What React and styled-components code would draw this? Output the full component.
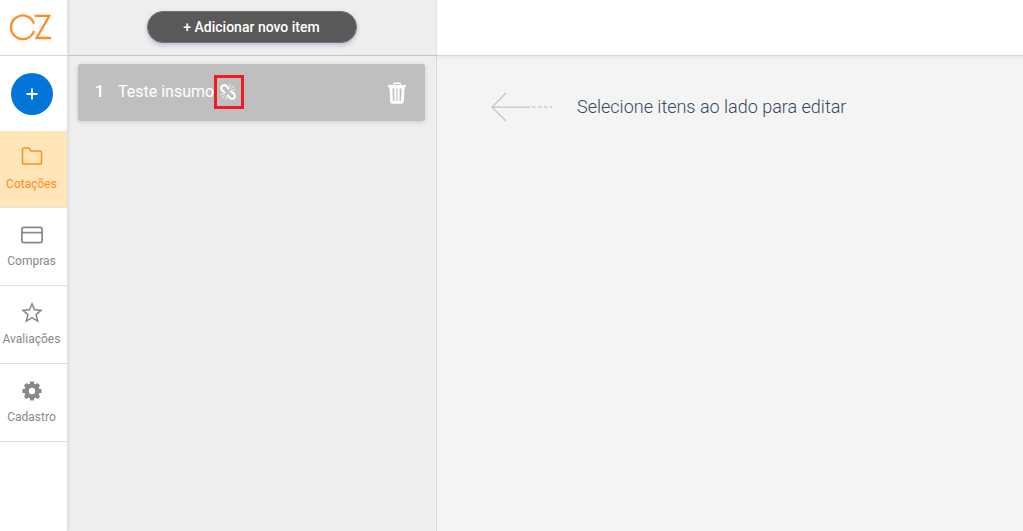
import React from "react";
import styled, { createGlobalStyle } from "styled-components";

const GlobalStyle = createGlobalStyle`
  * {
    box-sizing: border-box;
  }
  body {
    margin: 0;
    font-family: Roboto, "Liberation Sans", sans-serif;
    background: #f4f4f4;
  }
`;

const Page = styled.div`
  display: flex;
  min-height: 100vh;
`;

const Sidebar = styled.nav`
  display: flex;
  flex-direction: column;
  flex: 0 0 68px;
  background: #fff;
  border-right: 1px solid #dedede;
  box-shadow: 1px 0 3px rgba(0, 0, 0, 0.06);
  z-index: 2;
`;

const LogoLink = styled.a`
  display: flex;
  align-items: center;
  height: 56px;
  padding: 0 0 2px 10px;
  border-bottom: 1px solid #d8d8d8;
`;

const NewArea = styled.div`
  display: flex;
  align-items: center;
  justify-content: center;
  height: 75px;
  padding-right: 3px;
`;

const RoundButton = styled.button`
  display: flex;
  align-items: center;
  justify-content: center;
  width: 42px;
  height: 42px;
  padding: 0;
  border: none;
  border-radius: 50%;
  background: #0275d8;
  color: #fff;
  cursor: pointer;
`;

const NavItem = styled.a`
  display: flex;
  flex-direction: column;
  align-items: center;
  gap: 8px;
  height: ${(props) => (props.$active ? "77px" : "78px")};
  padding: 15px 4px 0 0;
  border-bottom: 1px solid #e2e2e2;
  background: ${(props) => (props.$active ? "#ffe5b8" : "#fff")};
  color: ${(props) => (props.$active ? "#ff8c1a" : "#888")};
  font-size: 12px;
  line-height: 16px;
  text-decoration: none;
`;

const ItemsPanel = styled.section`
  flex: 0 0 369px;
  background: #eee;
`;

const PanelHeader = styled.header`
  display: flex;
  align-items: center;
  justify-content: center;
  height: 56px;
  padding: 0 2px 1px 0;
  border-bottom: 1px solid #c3c3cf;
`;

const AddButton = styled.button`
  width: 210px;
  height: 32px;
  border: 1px solid #6b7488;
  border-radius: 16px;
  background: #595959;
  box-shadow: 0 2px 4px rgba(70, 70, 110, 0.3);
  color: #fff;
  font-family: inherit;
  font-size: 14px;
  font-weight: 500;
  cursor: pointer;
`;

const ItemList = styled.ul`
  min-height: calc(100vh - 56px);
  margin: 0;
  padding: 8px 11px 8px 10px;
  border-right: 1px solid #d9d9e0;
  list-style: none;
`;

const Item = styled.li`
  display: flex;
  align-items: center;
  height: 57px;
  padding: 0 19px 2px 17px;
  border-radius: 3px;
  background: #bfbfbf;
  box-shadow: 0 1px 5px rgba(0, 0, 0, 0.14);
  color: #fff;
  font-size: 16px;
  line-height: 20px;
`;

const ItemNumber = styled.span`
  width: 23px;
  font-weight: 500;
`;

const UnlinkedMark = styled.span`
  display: flex;
  align-items: center;
  justify-content: center;
  width: 30px;
  height: 34px;
  padding-right: 2px;
  border: 3px solid #ed1c24;
`;

const TrashButton = styled.button`
  display: flex;
  margin-left: auto;
  padding: 2px 0 0;
  border: none;
  background: transparent;
  color: #fff;
  cursor: pointer;
`;

const Content = styled.main`
  flex: 1;
  min-width: 0;
`;

const ContentHeader = styled.header`
  height: 56px;
  background: #fff;
  border-bottom: 1px solid #d8d8d8;
  box-shadow: 0 1px 4px rgba(0, 0, 0, 0.08);
`;

const EmptyState = styled.div`
  display: flex;
  align-items: center;
  gap: 24px;
  padding: 36px 24px 0 54px;
`;

const EmptyText = styled.p`
  margin: 0;
  color: #34495e;
  font-size: 18px;
  font-weight: 300;
  line-height: 24px;
`;

const Logo = () => (
  <svg width="44" height="30" viewBox="0 0 44 30" fill="none" stroke="#ff8c26" strokeWidth="2.3">
    <path d="M24 11.6A11.8 11.8 0 1 0 24 19" />
    <path d="M24.6 3.8H39.4L26.6 26H41" />
  </svg>
);

const PlusIcon = () => (
  <svg width="12" height="12" viewBox="0 0 12 12" stroke="currentColor" strokeWidth="2">
    <path d="M6 0.5V11.5M0.5 6H11.5" />
  </svg>
);

const FolderIcon = () => (
  <svg width="22" height="22" viewBox="0 0 22 22" fill="none" stroke="currentColor" strokeWidth="1.5">
    <path d="M1.5 16.2V3.8Q1.5 2 3.3 2H7.2Q8.8 2 9 3.6Q9.2 5 10.6 5H18.8Q20.5 5 20.5 6.7V16.2Q20.5 18 18.8 18H3.3Q1.5 18 1.5 16.2Z" />
  </svg>
);

const CardIcon = () => (
  <svg width="22" height="22" viewBox="0 0 22 22" fill="none" stroke="currentColor" strokeWidth="1.7">
    <rect x="0.9" y="4.4" width="20.2" height="15.2" rx="1.8" />
    <path d="M1 9.6H21" />
  </svg>
);

const StarIcon = () => (
  <svg width="22" height="22" viewBox="0 0 22 22" fill="none" stroke="currentColor" strokeWidth="1.5">
    <path d="M11 2.9L13.5 8.8L20 9.4L15.1 13.6L16.7 20.1L11 16.7L5.3 20.1L6.9 13.6L2 9.4L8.5 8.8Z" />
  </svg>
);

const teeth = [0, 45, 90, 135, 180, 225, 270, 315];

const GearIcon = () => (
  <svg width="22" height="22" viewBox="0 -1 22 22" fill="currentColor">
    <circle cx="11" cy="11" r="5.4" fill="none" stroke="currentColor" strokeWidth="4.4" />
    {teeth.map((angle) => (
      <path key={angle} d="M8.6 5L9.2 1.4H12.8L13.4 5Z" transform={`rotate(${angle} 11 11)`} />
    ))}
  </svg>
);

const UnlinkIcon = () => (
  <svg width="18" height="18" viewBox="0 0 18 18" fill="none" stroke="#fff" strokeLinecap="round">
    <path
      d="M5.6 9.4L3.4 7.6Q1.2 5.2 3 3.2Q5.4 1 7.6 3.2L9.6 5.8M12 8.4L14.8 10.6Q17 13 15.2 15Q12.8 17 10.6 14.8L8.8 12.4"
      strokeWidth="2"
    />
    <path
      d="M11 1.6V4.4M12.4 5.4L15 2.8M13.2 6.9H16M1.8 11.3H4.8M2.8 15.2L5.6 12.5M7 13.6V16.4"
      strokeWidth="0.9"
      opacity="0.85"
    />
  </svg>
);

const TrashIcon = () => (
  <svg width="18" height="22" viewBox="0 0 18 22" fill="currentColor">
    <path
      fillRule="evenodd"
      d="M5 3V2Q5 0.4 6.6 0.4H11.4Q13 0.4 13 2V3H18V5.2H16.6L15.8 19.6Q15.6 21.8 13.6 21.8H4.4Q2.4 21.8 2.2 19.6L1.4 5.2H0V3ZM6.4 3H11.6V1.9H6.4ZM4.4 6.6L5 19H6.4V6.6ZM8.4 6.6V19H9.6V6.6ZM11.6 6.6V19H13L13.6 6.6Z"
    />
  </svg>
);

const ArrowIcon = () => (
  <svg width="62" height="30" viewBox="0 0 62 30" fill="none" stroke="#bcc7d0" strokeWidth="1.3">
    <path d="M15 1L1 15.2L15 29M1 15.2H39" />
    <path d="M41 15.2H61" strokeDasharray="3.6 2.4" />
  </svg>
);

const menu = [
  { label: "Cotações", Icon: FolderIcon, active: true },
  { label: "Compras", Icon: CardIcon },
  { label: "Avaliações", Icon: StarIcon },
  { label: "Cadastro", Icon: GearIcon },
];

const items = [{ id: 1, name: "Teste insumo" }];

const App = () => {
  return (
    <>
      <GlobalStyle />
      <Page>
        <Sidebar>
          <LogoLink href="#" aria-label="CZ">
            <Logo />
          </LogoLink>
          <NewArea>
            <RoundButton type="button" aria-label="Novo">
              <PlusIcon />
            </RoundButton>
          </NewArea>
          {menu.map(({ label, Icon, active }) => (
            <NavItem key={label} href="#" $active={active}>
              <Icon />
              {label}
            </NavItem>
          ))}
        </Sidebar>
        <ItemsPanel>
          <PanelHeader>
            <AddButton type="button">+ Adicionar novo item</AddButton>
          </PanelHeader>
          <ItemList>
            {items.map((item) => (
              <Item key={item.id}>
                <ItemNumber>{item.id}</ItemNumber>
                <span>{item.name}</span>
                <UnlinkedMark>
                  <UnlinkIcon />
                </UnlinkedMark>
                <TrashButton type="button" aria-label="Excluir">
                  <TrashIcon />
                </TrashButton>
              </Item>
            ))}
          </ItemList>
        </ItemsPanel>
        <Content>
          <ContentHeader />
          <EmptyState>
            <ArrowIcon />
            <EmptyText>Selecione itens ao lado para editar</EmptyText>
          </EmptyState>
        </Content>
      </Page>
    </>
  );
};

export default App;
